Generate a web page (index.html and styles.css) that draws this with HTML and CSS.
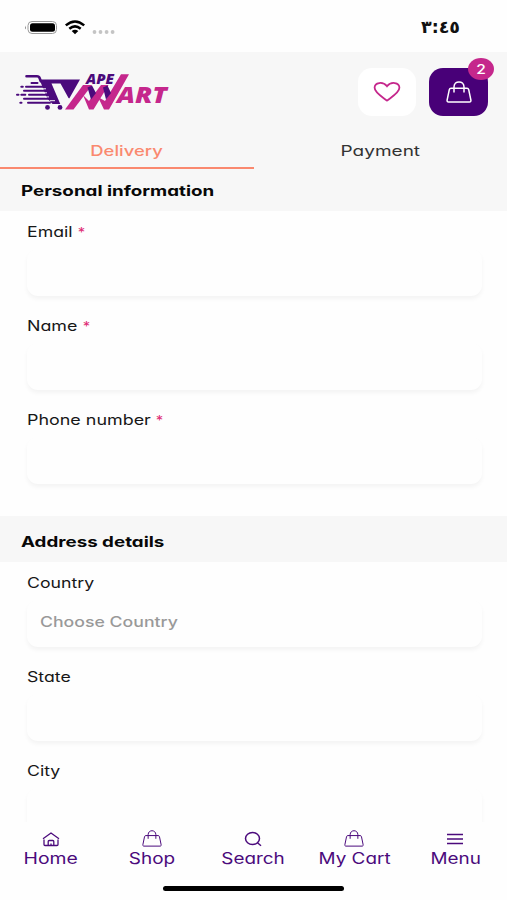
FILE: index.html
```html
<!DOCTYPE html>
<html lang="en">
<head>
<meta charset="utf-8">
<title>Ape Mart - Delivery</title>
<link rel="stylesheet" href="styles.css">
</head>
<body>
<svg width="0" height="0" class="defs">
  <symbol id="bag" viewBox="0 0 26 22">
    <path d="M5 7.200h16c1 0 1.500.6 1.700 1.400l2.200 10.600c.2 1-.4 1.700-1.400 1.700h-21c-1 0-1.600-.7-1.400-1.700l2.200-10.600c.2-.8.7-1.400 1.700-1.400z"/>
    <path d="M8 11.400V6c0-6.800 10-6.800 10 0v5.400"/>
  </symbol>
</svg>
<div class="status">
  <svg class="indicators" viewBox="0 0 92 18" width="92" height="18">
    <rect x="4" y="3.500" width="28.500" height="12" rx="4" fill="#fff" stroke="#999" stroke-width="1"/>
    <rect x="6" y="5.200" width="25" height="8.600" rx="2.500"/>
    <path d="M2 7.500v4q-1.500-2 0-4z" fill="#777"/>
    <g fill="none" stroke="#000" stroke-width="2.500"><path d="M41.800 7.400q9.200-7.800 18.400 0"/><path d="M45.300 10.800q5.700-4.800 11.400 0"/></g>
    <path d="M47.700 13q3.300-2.600 6.600 0L51 16.200z"/>
    <g fill="#c4c4c4"><circle cx="70.500" cy="14" r="1.900"/><circle cx="76.500" cy="14" r="1.900"/><circle cx="82.600" cy="14" r="1.900"/><circle cx="88.600" cy="14" r="1.900"/></g>
  </svg>
  <bdo class="clock" dir="ltr">٣:٤٥</bdo>
</div>
<header class="top">
  <svg class="logo" viewBox="15 70 155 42" width="155" height="42">
    <g fill="none" stroke="#4b0a7c" stroke-width="2.600" stroke-linecap="round" stroke-linejoin="round">
      <path d="M26.500 76.200H37q2 0 2.700 2l1 3"/>
      <g stroke-width="2"><path d="M31.500 83h6M21.300 86.800h1.500M26 86.800h19M24 90.700h23M17 94.800h1.500M21.300 94.800h4M29 94.800h19M24 98.800h26M20.300 102.800h1.200M28 102.800h22"/></g>
    </g>
    <path d="M39.500 79.500H80L69 99 65 104H52.500L47 98z" fill="#4b0a7c"/>
    <path d="M42 88.800h4M43 92.800h4M45 96.900h4M50 100.700h5" stroke="#f7f7f7" stroke-width="1"/>
    <path d="M51.500 83.500H60.500L68.500 98 72 100 66 108H62z" fill="#f7f7f7"/>
    <g fill="#4b0a7c"><circle cx="47.500" cy="107.400" r="2.400"/><circle cx="60" cy="107.400" r="2.400"/></g>
    <g fill="#c5278c"><path d="M65 109.500H73.500L92 85H83z"/><path d="M83 95 89 109.500H93.500L108.500 85H101L89 101z"/><path d="M98 97 104 109.500H109L129 74.200H121L105 101z"/></g>
    <g fill="#4b0a7c"><path d="M87.500 87.500 92 85.500 96 93 91 99.500z"/><path d="M103 87.500 107.500 85.500 111 93 106 99.500z"/></g>
    <text class="logo-text" x="86" y="83.700" font-size="13.500" textLength="28" lengthAdjust="spacingAndGlyphs" fill="#4b0a7c">APE</text>
    <text class="logo-text" x="117" y="103" font-size="23.500" textLength="50" lengthAdjust="spacingAndGlyphs" fill="#c5278c">ART</text>
  </svg>
  <div class="actions">
    <div class="btn"><svg width="28" height="22" viewBox="0 0 28 22" class="heart"><path d="M14 19.600C9.500 16 1.600 11.700 1.600 6.800 1.600 1.200 10 .2 14 5.200 18 .2 26.400 1.200 26.400 6.800 26.400 11.700 18.500 16 14 19.600z"/></svg></div>
    <div class="btn cart"><svg class="icon light" width="26" height="22"><use href="#bag"/></svg><span class="badge"><span>2</span></span></div>
  </div>
</header>
<nav class="tabs">
  <div class="tab active"><span class="t delivery">Delivery</span></div>
  <div class="tab"><span class="t payment">Payment</span></div>
</nav>
<h2 class="band first"><span class="t">Personal information</span></h2>
<section class="form">
  <label class="field"><span class="label email"><span class="t">Email</span><i>*</i></span><span class="input"></span></label>
  <label class="field"><span class="label name"><span class="t">Name</span><i>*</i></span><span class="input"></span></label>
  <label class="field"><span class="label phone"><span class="t">Phone number</span><i>*</i></span><span class="input"></span></label>
</section>
<h2 class="band second"><span class="t">Address details</span></h2>
<section class="form last">
  <label class="field"><span class="label"><span class="t">Country</span></span><span class="input"><span class="t">Choose Country</span></span></label>
  <label class="field"><span class="label"><span class="t">State</span></span><span class="input"></span></label>
  <label class="field"><span class="label"><span class="t">City</span></span><span class="input"></span></label>
</section>
<footer class="bottom">
  <div class="items">
    <div class="item"><svg class="icon" width="18" height="17" viewBox="0 0 18 17"><path d="M1 8.800 9 3l8 5.800M2 9.500V14.500q0 1 1 1H15q1 0 1-1V9.500M6.200 15.500V11.500q0-1 1-1H10.800q1 0 1 1V15.500M9 15.500v-2"/></svg><span class="t home">Home</span></div>
    <div class="item"><svg class="icon" width="20" height="17"><use href="#bag"/></svg><span class="t">Shop</span></div>
    <div class="item"><svg class="icon line-icon" width="18" height="17" viewBox="0 0 18 17"><ellipse cx="8.500" cy="8.500" rx="7" ry="6"/><path d="m13.500 12.800 3.500 3"/></svg><span class="t">Search</span></div>
    <div class="item"><svg class="icon" width="20" height="17"><use href="#bag"/></svg><span class="t">My Cart</span></div>
    <div class="item"><svg class="icon line-icon" width="18" height="17" viewBox="0 0 18 17"><path d="M1 4.500h16M1 9h16M1 13.500h16"/></svg><span class="t">Menu</span></div>
  </div>
  <div class="home-bar"></div>
</footer>
</body>
</html>
```
FILE: styles.css
```css
* { box-sizing: border-box; }
body { margin: 0; width: 507px; height: 900px; overflow: hidden; display: flex; flex-direction: column; background: #fefefe; color: #171717; font: 14.500px/20px Inter, "Open Sans", sans-serif; font-feature-settings: "cv11" 1, "ss03" 1; }
body > * { flex-shrink: 0; }
.defs { display: none; }
.status { height: 52px; display: flex; justify-content: space-between; padding: 18px 47px 0 24px; }
.clock { font: bold 17.500px/18px "DejaVu Sans", sans-serif; color: #111; }
.top { height: 82px; background: #f7f7f7; display: flex; justify-content: space-between; padding: 16px 19px 0 15px; }
.logo { margin-top: 2px; }
.logo-text { font-family: "Open Sans", sans-serif; font-weight: 800; font-style: italic; }
.actions { display: flex; gap: 13px; }
.btn { position: relative; width: 58px; height: 48px; border-radius: 14px; background: #fff; display: flex; align-items: center; justify-content: center; }
.cart { width: 59px; background: #480078; }
.heart { fill: none; stroke: #c5278c; stroke-width: 1.800; }
.badge { position: absolute; right: -6px; top: -10px; width: 26px; height: 22px; border-radius: 50%; background: #c5278c; color: #fff; display: flex; align-items: center; justify-content: center; font-size: 13px; font-weight: 500; }
.badge span { transform: scaleX(1.2); }
.icon { fill: none; stroke: #4b0a7c; stroke-width: 1.300; }
.light { stroke: #fff; stroke-width: 1.500; }
.line-icon { stroke-width: 1.500; }
.tabs { height: 35px; display: flex; background: #f7f7f7; }
.tab { flex: 1; display: flex; justify-content: center; padding-top: 7px; color: #333; }
.active { color: #fa896f; border-bottom: 2px solid #fa896f; font-weight: 500; }
.t { display: inline-block; white-space: nowrap; transform: scaleX(var(--sx, 1.220)); }
.delivery { --sx: 1.270; }
.payment { --sx: 1.310; }
.band { --sx: 1.295; margin: 0; background: #f7f7f7; padding-left: 20.500px; font-size: 14.500px; line-height: 20px; font-weight: 700; color: #080808; }
.band .t, .label .t, .input .t { transform-origin: left; }
.first { height: 42px; padding-top: 12px; }
.second { height: 46px; padding-top: 16px; }
.form { height: 305px; padding: 11px 25px 0 27px; display: flex; flex-direction: column; gap: 9px; }
.last { flex: 1 1 0; overflow: hidden; }
.field { display: block; height: 85px; flex-shrink: 0; }
.label { display: flex; height: 20px; }
.label i { color: #df2c76; font-style: normal; font-size: 13.500px; transform: scaleX(1.1); margin-left: var(--gap); }
.email { --gap: 14px; }
.name { --sx: 1.230; --gap: 15px; }
.phone { --sx: 1.235; --gap: 29px; }
.input { display: flex; align-items: center; height: 47px; margin-top: 7px; border-radius: 11px; background: #fefefe; box-shadow: 0 3px 4px rgba(0,0,0,.045); padding: 0 13px 4px; color: #999; font-weight: 500; }
.bottom { height: 78px; background: #fefefe; padding-top: 8px; }
.items { display: grid; grid-template-columns: repeat(5, 101.200px); }
.item { display: flex; flex-direction: column; align-items: center; gap: 2px; color: #4b0a7c; font-size: 15.500px; }
.item .t { line-height: 20px; }
.home { --sx: 1.250; }
.home-bar { width: 181px; height: 5px; margin: 17px auto 0; border-radius: 3px; background: #000; }
```
